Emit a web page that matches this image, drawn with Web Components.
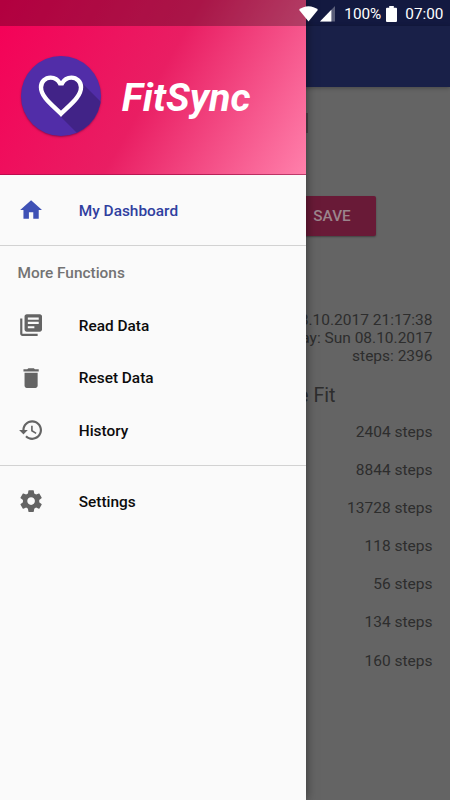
<!DOCTYPE html>
<html lang="en">
<head>
<meta charset="utf-8">
<title>FitSync</title>
<style>
html, body
{
    margin: 0;
    height: 100%;
    overflow: hidden;
}
body
{
    font-family: Roboto, "Liberation Sans", sans-serif;
    font-size: 15.3px;
}
</style>
</head>
<body>
<fit-app></fit-app>

<script>
function define(name, html)
{
    var temp = document.createElement('template')
    temp.innerHTML = html

    window.customElements.define(name, class extends HTMLElement
    {
        constructor()
        {
            super()
            this.attachShadow({mode:'open'})
            this.shadowRoot.appendChild(temp.content.cloneNode(true))
        }
    })
}

define('fit-app', `
<style>
:host
{
    display: block;
    position: relative;
    width: 450px;
    height: 800px;
    overflow: hidden;
    background: #646464;
}
nav-drawer, status-bar
{
    position: absolute;
    top: 0;
    left: 0;
}
</style>
<dashboard-page></dashboard-page>
<nav-drawer></nav-drawer>
<status-bar></status-bar>
`)

define('status-bar', `
<style>
:host
{
    display: flex;
    align-items: center;
    justify-content: flex-end;
    box-sizing: border-box;
    width: 450px;
    height: 26px;
    padding: 1px 6.6px 0 0;
    color: #fff;
}
svg
{
    display: block;
}
.wifi { margin-right: 2px; }
.signal { margin-right: 9px; }
.battery { margin: 0 8px 0 5px; }
</style>
<svg class="wifi" width="19" height="16" viewBox="0 0 19 16"><path fill="#fff" d="M0 3.8C5.3-.9 13.7-.9 19 3.8L9.5 15.5z"/></svg>
<svg class="signal" width="15" height="16" viewBox="0 0 15 16"><path fill="#fff" fill-opacity=".3" d="M15 0v15.5H0z"/><path fill="#fff" d="M11.4 3.7v11.8H0z"/></svg>
<span>100%</span>
<svg class="battery" width="11" height="16" viewBox="0 0 11 16"><path fill="#fff" d="M3.2 0h4.6v1.7H10q1 0 1 1V15q0 1-1 1H1q-1 0-1-1V2.7q0-1 1-1h2.2z"/></svg>
<span>07:00</span>
`)

define('step-row', `
<style>
:host
{
    display: block;
    height: 38.1px;
    line-height: 38.1px;
}
</style>
<slot></slot>
`)

define('raised-button', `
<style>
:host
{
    display: flex;
    align-items: center;
    justify-content: center;
    width: 88px;
    height: 40px;
    border-radius: 2px;
    background: #691a37;
    color: #9b858c;
    font-size: 15.3px;
    font-weight: 500;
    box-shadow: 0 1px 2px rgba(0, 0, 0, .35);
}
</style>
<slot></slot>
`)

define('dashboard-page', `
<style>
:host
{
    display: flex;
    flex-direction: column;
    height: 100%;
    color: #2d2d2d;
    font-size: 15.5px;
    text-align: right;
}
.status
{
    height: 26px;
    background: #131940;
}
.toolbar
{
    height: 61px;
    background: #192048;
    box-shadow: 0 1px 4px rgba(0, 0, 0, .3);
}
.goal
{
    box-sizing: border-box;
    width: 308px;
    height: 20px;
    margin-top: 26px;
    border-right: 2px solid #4d4349;
}
raised-button
{
    margin: 63px 0 0 288px;
}
.sync
{
    margin-top: 75px;
    padding-right: 17.5px;
    line-height: 18px;
}
h2
{
    width: 335.5px;
    margin: 19px 0 0;
    font-size: 19.7px;
    font-weight: 400;
    line-height: 24px;
}
.days
{
    margin-top: 5px;
    padding-right: 17.5px;
}
</style>
<div class="status"></div>
<div class="toolbar"></div>
<div class="goal"></div>
<raised-button>SAVE</raised-button>
<div class="sync">
    <div>08.10.2017 21:17:38</div>
    <div>day: Sun 08.10.2017</div>
    <div>steps: 2396</div>
</div>
<h2>Google Fit</h2>
<div class="days">
    <step-row>2404 steps</step-row>
    <step-row>8844 steps</step-row>
    <step-row>13728 steps</step-row>
    <step-row>118 steps</step-row>
    <step-row>56 steps</step-row>
    <step-row>134 steps</step-row>
    <step-row>160 steps</step-row>
</div>
`)

define('fit-logo', `
<style>
:host
{
    display: block;
    width: 80px;
    height: 80px;
    border-radius: 50%;
    overflow: hidden;
    background: #512da8;
    box-shadow: 0 1px 2px rgba(60, 0, 50, .5);
}
svg { display: block; }
</style>
<svg width="80" height="80" viewBox="0 0 80 80">
    <path fill="#412387" d="M21 38L40 61l19 19h21V46L59 25 50 21l-10 6-10-6-9 4-2 8z"/>
    <path fill="none" stroke="#fff" stroke-width="4.4" d="M40 57.8C30 48 20 40.5 20 31.2 20 25.8 24.2 21.6 29.6 21.6c4.3 0 7.6 2.5 9.3 5.7h2.2c1.7-3.2 5-5.7 9.3-5.7 5.4 0 9.6 4.2 9.6 9.6C60 40.5 50 48 40 57.8z"/>
</svg>
`)

define('drawer-header', `
<style>
:host
{
    display: block;
    height: 175px;
    box-sizing: border-box;
    background: linear-gradient(119.8deg, #f50057, #e91e63 50%, #ff80ab);
    border-bottom: 1px solid rgba(90, 30, 60, .35);
}
.shade
{
    height: 26px;
    background: rgba(0, 0, 0, .27);
}
.brand
{
    display: flex;
    align-items: flex-start;
    gap: 20.5px;
    padding: 30px 0 0 21.3px;
}
.name
{
    color: #fff;
    font-size: 39.6px;
    font-style: italic;
    font-weight: 700;
    line-height: 80px;
    padding-top: 2px;
}
</style>
<div class="shade"></div>
<div class="brand">
    <fit-logo></fit-logo>
    <div class="name"><slot></slot></div>
</div>
`)

define('nav-group', `
<style>
:host
{
    display: block;
    padding: 8.7px 0;
    border-bottom: 1px solid #d2d2d2;
}
:host([titled]) { padding-top: 0; }
:host([last]) { border: none; }
::slotted(h3)
{
    height: 53px;
    margin: 0;
    padding-left: 17.5px;
    color: #737373;
    font-size: 15.4px;
    font-weight: 500;
    line-height: 55px;
}
</style>
<slot></slot>
`)

var icons = {
    home: 'M10 20v-6h4v6h5v-8h3L12 3 2 12h3v8z',
    library: 'M4 6H2v14c0 1.1.9 2 2 2h14v-2H4V6zm16-4H8c-1.1 0-2 .9-2 2v12c0 1.1.9 2 2 2h12c1.1 0 2-.9 2-2V4c0-1.1-.9-2-2-2zm-1 9H9V9h10v2zm-4 4H9v-2h6v2zm4-8H9V5h10v2z',
    trash: 'M6 19c0 1.1.9 2 2 2h8c1.1 0 2-.9 2-2V7H6v12zM19 4h-3.5l-1-1h-5l-1 1H5v2h14V4z',
    history: 'M13 3c-4.97 0-9 4.03-9 9H1l3.89 3.89.07.14L9 12H6c0-3.87 3.13-7 7-7s7 3.13 7 7-3.13 7-7 7c-1.93 0-3.68-.79-4.94-2.06l-1.42 1.42C8.27 19.99 10.51 21 13 21c4.97 0 9-4.03 9-9s-4.03-9-9-9zm-1 5v5l4.28 2.54.72-1.21-3.5-2.08V8H12z',
    gear: 'M19.43 12.98c.04-.32.07-.64.07-.98s-.03-.66-.07-.98l2.11-1.65c.19-.15.24-.42.12-.64l-2-3.46c-.12-.22-.39-.3-.61-.22l-2.49 1c-.52-.4-1.08-.73-1.69-.98l-.38-2.65C14.46 2.18 14.25 2 14 2h-4c-.25 0-.46.18-.49.42l-.38 2.65c-.61.25-1.17.59-1.69.98l-2.49-1c-.23-.09-.49 0-.61.22l-2 3.46c-.13.22-.07.49.12.64l2.11 1.65c-.04.32-.07.65-.07.98s.03.66.07.98l-2.11 1.65c-.19.15-.24.42-.12.64l2 3.46c.12.22.39.3.61.22l2.49-1c.52.4 1.08.73 1.69.98l.38 2.65c.03.24.24.42.49.42h4c.25 0 .46-.18.49-.42l.38-2.65c.61-.25 1.17-.59 1.69-.98l2.49 1c.23.09.49 0 .61-.22l2-3.46c.12-.22.07-.49-.12-.64l-2.11-1.65zM12 15.5c-1.93 0-3.5-1.57-3.5-3.5s1.57-3.5 3.5-3.5 3.5 1.57 3.5 3.5-1.57 3.5-3.5 3.5z'
}

var itemTemp = document.createElement('template')

itemTemp.innerHTML = `
<style>
:host
{
    display: flex;
    align-items: center;
    height: 52.5px;
    padding-left: 17.6px;
    gap: 35px;
    color: #0c0c0c;
    font-size: 15.4px;
    font-weight: 500;
    cursor: pointer;
}
:host([active]) { color: #303f9f; }
svg
{
    display: block;
    width: 26.2px;
    height: 26.2px;
    fill: #646464;
}
:host([active]) svg { fill: #3f51b5; }
span { padding-top: 1.4px; }
</style>
<svg viewBox="0 0 24 24"><path/></svg>
<span><slot></slot></span>
`

class NavItem extends HTMLElement
{
    constructor()
    {
        super()
        this.attachShadow({mode:'open'})
        this.shadowRoot.appendChild(itemTemp.content.cloneNode(true))
    }

    connectedCallback()
    {
        this.shadowRoot.querySelector('path').setAttribute('d', icons[this.getAttribute('icon')])
    }
}

window.customElements.define('nav-item', NavItem)

define('nav-drawer', `
<style>
:host
{
    display: block;
    width: 306px;
    height: 800px;
    background: #fafafa;
    box-shadow: 0 0 10px rgba(0, 0, 0, .5);
}
</style>
<drawer-header>FitSync</drawer-header>
<nav-group>
    <nav-item icon="home" active>My Dashboard</nav-item>
</nav-group>
<nav-group titled>
    <h3>More Functions</h3>
    <nav-item icon="library">Read Data</nav-item>
    <nav-item icon="trash">Reset Data</nav-item>
    <nav-item icon="history">History</nav-item>
</nav-group>
<nav-group last>
    <nav-item icon="gear">Settings</nav-item>
</nav-group>
`)
</script>
</body>
</html>
